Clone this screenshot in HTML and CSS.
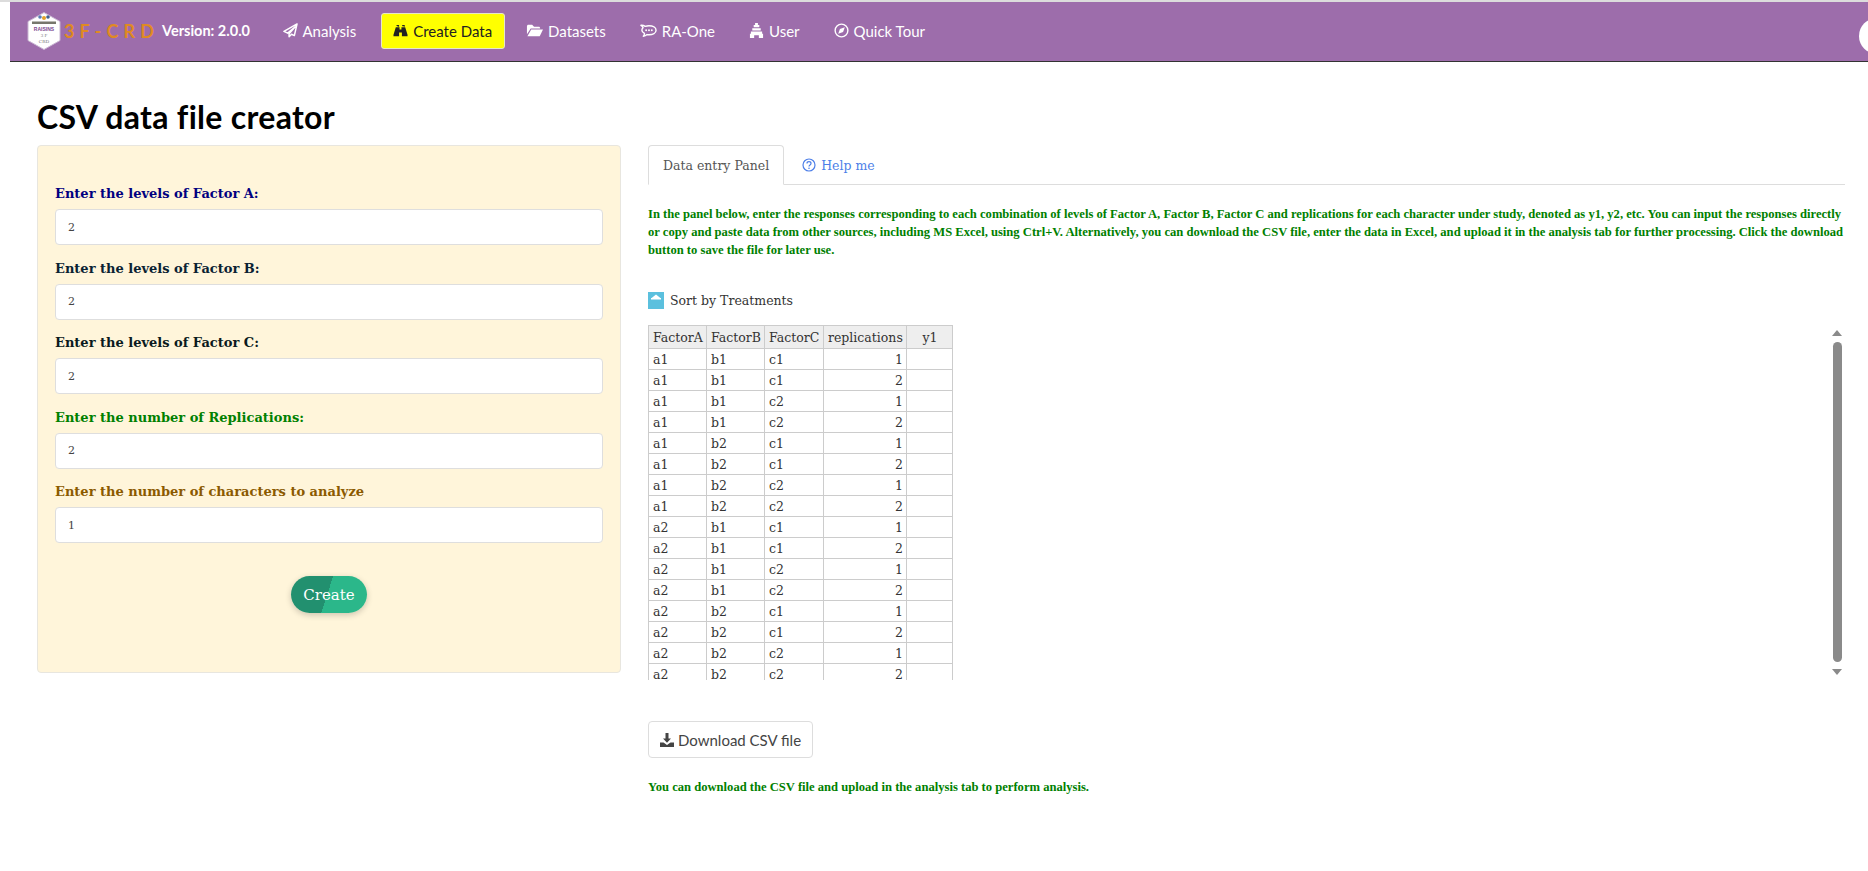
FILE: index.html
```html
<!DOCTYPE html>
<html lang="en">
<head>
  <meta charset="UTF-8" />
  <title>3F-CRD - CSV data file creator</title>
  <link rel="stylesheet" href="styles.css">
</head>
<body>
  <div class="page">
    <nav class="navbar">
      <div class="brand">
        <svg class="logo" width="34" height="38" viewBox="0 0 34 38">
          <polygon points="17,0.5 33,9.5 33,28.5 17,37.5 1,28.5 1,9.5" fill="#fff" stroke="#c9b6d2"/>
          <circle cx="13" cy="5" r="1.800" fill="#5a7fb5"/>
          <circle cx="17" cy="6" r="2" fill="#e3a028"/>
          <circle cx="21" cy="5" r="1.800" fill="#3f5f8f"/>
          <rect x="5" y="9.500" width="24" height="2.500" fill="#77776c"/>
          <text class="logo-band" x="17" y="18.500">RAISINS</text>
          <text class="logo-small" x="17" y="25">3 F</text>
          <text class="logo-small" x="17" y="30.500">CRD</text>
        </svg>
        <span class="brand-name">3 F - C R D</span>
        <span class="brand-version">Version: 2.0.0</span>
      </div>
      <ul class="nav-links">
        <li class="nav-item">
          <svg class="nav-icon" viewBox="0 0 16 16"><path d="M15 1 1 9l4 1.800L13 4 6.500 11.600v3l2.600-2.600 3 1.400z" fill="none" stroke="currentColor" stroke-width="1.600" stroke-linejoin="round"/></svg>
          Analysis
        </li>
        <li class="nav-item active">
          <svg class="nav-icon" viewBox="0 0 16 16"><path d="M3.500 2h3v2h-1v-.500h-1V4zM9.500 2h3v2h-1v-.500h-1V4zM3 4.500h4V7h2V4.500h4l2.500 8V14H9.500v-4h-3v4H.5v-1.500z" fill="currentColor"/></svg>
          Create Data
        </li>
        <li class="nav-item">
          <svg class="nav-icon wide" viewBox="0 0 18 14"><path d="M1 2.500C1 1.700 1.700 1 2.500 1h4l2 2h5c.8 0 1.500.7 1.500 1.500V5H5L1 11z" fill="currentColor"/><path d="M5.500 6H18l-3.500 7H1.500z" fill="currentColor"/></svg>
          Datasets
        </li>
        <li class="nav-item">
          <svg class="nav-icon wide" viewBox="0 0 18 15"><path d="M9.500 2.500c4 0 7.500 1.700 7.500 4.700s-3.500 4.800-7.500 4.800c-.8 0-1.400 0-2-.2-1 1-2.500 1.700-4 1.700 1-.9 1.300-1.900 1.200-2.900C3 9.700 2 8.500 2 7.200c0-1 .5-2 1.300-2.600C2.800 3.500 2 2.500 1 2c1.700-.2 3.300.3 4.600 1.100 1.200-.4 2.500-.6 3.900-.6z" fill="none" stroke="currentColor" stroke-width="1.500" stroke-linejoin="round"/><circle cx="6.500" cy="7.300" r="1" fill="currentColor"/><circle cx="9.500" cy="7.300" r="1" fill="currentColor"/><circle cx="12.500" cy="7.300" r="1" fill="currentColor"/></svg>
          RA-One
        </li>
        <li class="nav-item">
          <svg class="nav-icon" viewBox="0 0 16 16"><path d="M6.500 0h3v2h1.500v2.500H5V2h1.500zM3.500 5.500h9V8h-9zM2 9h12v2.500h1V16h-4.500v-3h-5v3H1v-4.500h1z" fill="currentColor"/></svg>
          User
        </li>
        <li class="nav-item">
          <svg class="nav-icon" viewBox="0 0 16 16"><circle cx="8" cy="8" r="6.800" fill="none" stroke="currentColor" stroke-width="1.500"/><path d="M11.500 4.500 9.700 9.700 4.500 11.500 6.300 6.300z" fill="currentColor"/></svg>
          Quick Tour
        </li>
      </ul>
      <span class="nav-circle"></span>
    </nav>

    <main class="content">
      <h1>CSV data file creator</h1>
      <div class="columns">
        <section class="well">
          <div class="form-group">
            <label class="label-a" for="levelsA">Enter the levels of Factor A:</label>
            <input id="levelsA" type="text" value="2">
          </div>
          <div class="form-group">
            <label class="label-b" for="levelsB">Enter the levels of Factor B:</label>
            <input id="levelsB" type="text" value="2">
          </div>
          <div class="form-group">
            <label class="label-c" for="levelsC">Enter the levels of Factor C:</label>
            <input id="levelsC" type="text" value="2">
          </div>
          <div class="form-group">
            <label class="label-r" for="reps">Enter the number of Replications:</label>
            <input id="reps" type="text" value="2">
          </div>
          <div class="form-group">
            <label class="label-n" for="chars">Enter the number of characters to analyze</label>
            <input id="chars" type="text" value="1">
          </div>
          <div class="create-row">
            <button class="create-btn" type="button">Create</button>
          </div>
        </section>

        <section class="panel">
          <ul class="tabs">
            <li class="tab active">Data entry Panel</li>
            <li class="tab help">
              <svg class="help-icon" viewBox="0 0 14 14"><circle cx="7" cy="7" r="6" fill="none" stroke="currentColor" stroke-width="1.200"/><path d="M5 5.500C5 4.300 6 3.700 7 3.700s2 .6 2 1.700c0 1.500-2 1.500-2 3" fill="none" stroke="currentColor" stroke-width="1.200"/><circle cx="7" cy="10.200" r=".8" fill="currentColor"/></svg>
              Help me
            </li>
          </ul>

          <p class="note intro">In the panel below, enter the responses corresponding to each combination of levels of Factor A, Factor B, Factor C and replications for each character under study, denoted as y1, y2, etc. You can input the responses directly or copy and paste data from other sources, including MS Excel, using Ctrl+V. Alternatively, you can download the CSV file, enter the data in Excel, and upload it in the analysis tab for further processing. Click the download button to save the file for later use.</p>

          <div class="sort-row">
            <svg class="sort-icon" width="16" height="17" viewBox="0 0 16 17"><rect width="16" height="17" fill="#5bc0de"/><path d="M3 6.500 8 2.500l5 4z" fill="#fff"/><rect x="3" y="6" width="10" height="1.500" fill="#fff"/></svg>
            <span>Sort by Treatments</span>
          </div>

          <div class="sheet">
            <div class="sheet-clip">
              <table>
                <thead>
                  <tr><th>FactorA</th><th>FactorB</th><th>FactorC</th><th>replications</th><th class="col-y">y1</th></tr>
                </thead>
                <tbody>
                  <tr><td>a1</td><td>b1</td><td>c1</td><td class="num">1</td><td></td></tr>
                  <tr><td>a1</td><td>b1</td><td>c1</td><td class="num">2</td><td></td></tr>
                  <tr><td>a1</td><td>b1</td><td>c2</td><td class="num">1</td><td></td></tr>
                  <tr><td>a1</td><td>b1</td><td>c2</td><td class="num">2</td><td></td></tr>
                  <tr><td>a1</td><td>b2</td><td>c1</td><td class="num">1</td><td></td></tr>
                  <tr><td>a1</td><td>b2</td><td>c1</td><td class="num">2</td><td></td></tr>
                  <tr><td>a1</td><td>b2</td><td>c2</td><td class="num">1</td><td></td></tr>
                  <tr><td>a1</td><td>b2</td><td>c2</td><td class="num">2</td><td></td></tr>
                  <tr><td>a2</td><td>b1</td><td>c1</td><td class="num">1</td><td></td></tr>
                  <tr><td>a2</td><td>b1</td><td>c1</td><td class="num">2</td><td></td></tr>
                  <tr><td>a2</td><td>b1</td><td>c2</td><td class="num">1</td><td></td></tr>
                  <tr><td>a2</td><td>b1</td><td>c2</td><td class="num">2</td><td></td></tr>
                  <tr><td>a2</td><td>b2</td><td>c1</td><td class="num">1</td><td></td></tr>
                  <tr><td>a2</td><td>b2</td><td>c1</td><td class="num">2</td><td></td></tr>
                  <tr><td>a2</td><td>b2</td><td>c2</td><td class="num">1</td><td></td></tr>
                  <tr><td>a2</td><td>b2</td><td>c2</td><td class="num">2</td><td></td></tr>
                </tbody>
              </table>
            </div>
            <div class="scrollbar">
              <span class="arrow-up"></span>
              <span class="thumb"></span>
              <span class="arrow-down"></span>
            </div>
          </div>

          <button class="download-btn" type="button">
            <svg class="download-icon" viewBox="0 0 14 14"><path d="M5.500 0h3v5.500H11L7 9.700 3 5.500h2.500z" fill="currentColor"/><path d="M0 9.500h3.500L7 12l3.500-2.500H14V14H0z" fill="currentColor"/></svg>
            Download CSV file
          </button>

          <p class="note outro">You can download the CSV file and upload in the analysis tab to perform analysis.</p>
        </section>
      </div>
    </main>
  </div>
</body>
</html>
```

FILE: styles.css
```css
* {
  margin: 0;
  padding: 0;
  box-sizing: border-box;
}

html, body {
  height: 100%;
  overflow: hidden;
}

body {
  background: #fff;
  color: #222;
  font-family: "DejaVu Serif", Georgia, serif;
  font-size: 12px;
  border-top: 2px solid #dcdcdc;
}

.page {
  padding-left: 10px;
}

/* navbar */
.navbar {
  display: flex;
  align-items: center;
  position: relative;
  height: 60px;
  padding: 0 0 2px 17px;
  background: #9d6dab;
  border-bottom: 1px solid #333;
  overflow: hidden;
  font-family: Lato, sans-serif;
}

.brand {
  display: flex;
  align-items: center;
}

.logo-band {
  font-family: "Liberation Sans", sans-serif;
  font-size: 5px;
  font-weight: 700;
  fill: #7d4a90;
  text-anchor: middle;
}

.logo-small {
  font-family: "Liberation Serif", serif;
  font-size: 5px;
  fill: #777;
  text-anchor: middle;
}

.brand-name {
  width: 98px;
  margin-left: 3px;
  color: #e08a22;
  font-size: 18px;
  font-weight: 700;
  letter-spacing: 0.4px;
}

.brand-version {
  color: #fff;
  font-size: 14.5px;
  font-weight: 700;
}

.nav-links {
  display: flex;
  align-items: center;
  list-style: none;
  margin-left: 20px;
}

.nav-item {
  display: flex;
  align-items: center;
  gap: 5px;
  height: 36px;
  padding: 0 11.5px;
  margin-right: 9px;
  color: #fff;
  font-size: 15px;
  border-radius: 3px;
  border: 1px solid transparent;
}

.nav-item:first-child {
  margin-right: 12px;
}

.nav-item.active {
  background: #ff0;
  color: #222;
  border-color: #e6e6c8;
}

.nav-icon {
  width: 15px;
  height: 15px;
}

.nav-icon.wide {
  width: 17px;
}

.nav-circle {
  position: absolute;
  right: -27px;
  top: 16px;
  width: 36px;
  height: 36px;
  background: #fff;
  border-radius: 50%;
}

/* page body */
.content {
  padding: 0 23px 0 27px;
}

h1 {
  margin: 37px 0 10px;
  font-family: Lato, sans-serif;
  font-size: 32px;
  font-weight: 700;
  line-height: 36px;
  letter-spacing: 0.3px;
  color: #000;
}

.columns {
  display: flex;
  gap: 27px;
}

.well {
  width: 584px;
  height: 528px;
  flex-shrink: 0;
  padding: 39px 17px 0;
  background: #fff5da;
  border: 1px solid #e8e6df;
  border-radius: 4px;
}

.form-group {
  margin-bottom: 14.5px;
}

.form-group label {
  display: block;
  margin-bottom: 7px;
  font-size: 13px;
  font-weight: 700;
  line-height: 17px;
}

.label-a { color: #000080; }
.label-b { color: #0a2233; }
.label-c { color: #0a1a20; }
.label-r { color: #008000; }
.label-n { color: #8b5a00; }

.form-group input {
  display: block;
  width: 100%;
  height: 36px;
  padding: 0 12px;
  font-family: inherit;
  font-size: 11px;
  color: #444;
  background: #fff;
  border: 1px solid #dedede;
  border-radius: 4px;
}

.create-row {
  display: flex;
  justify-content: center;
  margin-top: 33px;
}

.create-btn {
  width: 76px;
  height: 37px;
  font-family: inherit;
  font-size: 15px;
  color: #fff;
  background: linear-gradient(108deg, #22906f 48%, #2bb78a 48%);
  border: none;
  border-radius: 19px;
  box-shadow: 0 2px 6px rgba(0,0,0,0.2);
}

/* right panel */
.panel {
  flex: 1;
  min-width: 0;
}

.tabs {
  display: flex;
  list-style: none;
  height: 40px;
  border-bottom: 1px solid #ddd;
}

.tab {
  display: flex;
  align-items: center;
  height: 40px;
  padding: 0 14px;
  font-size: 12.5px;
}

.tab.active {
  color: #555;
  background: #fff;
  border: 1px solid #ddd;
  border-bottom-color: #fff;
  border-radius: 4px 4px 0 0;
}

.tab.help {
  gap: 5px;
  margin-left: 4px;
  color: #4d7fe8;
}

.help-icon {
  width: 14px;
  height: 14px;
}

.note {
  font-family: "Liberation Serif", serif;
  font-size: 12.6px;
  font-weight: 700;
  line-height: 18px;
  color: #008000;
}

.intro {
  margin-top: 20px;
}

.sort-row {
  display: flex;
  align-items: center;
  gap: 6px;
  margin-top: 33px;
  font-size: 12.5px;
  color: #333;
}

.sort-icon {
  flex-shrink: 0;
}

.sheet {
  display: flex;
  justify-content: space-between;
  height: 355px;
  margin-top: 16px;
  padding-right: 3px;
}

.sheet-clip {
  height: 355px;
  overflow: hidden;
}

table {
  border-collapse: collapse;
  table-layout: fixed;
  width: 304px;
  font-size: 12.5px;
}

th, td {
  height: 21px;
  padding: 0 3px 0 4px;
  border: 1px solid #ccc;
  font-weight: 400;
  color: #333;
  text-align: left;
  white-space: nowrap;
  overflow: hidden;
}

th {
  height: 23px;
  background: #eee;
}

th:nth-child(1), th:nth-child(2) { width: 58px; }
th:nth-child(3) { width: 59px; }
th:nth-child(4) { width: 83px; }
th.col-y { width: 46px; text-align: center; }
td.num { text-align: right; }

.scrollbar {
  display: flex;
  flex-direction: column;
  align-items: center;
  flex-shrink: 0;
  width: 10px;
  height: 355px;
  padding: 5px 0;
}

.arrow-up, .arrow-down {
  width: 0;
  height: 0;
  border-left: 5px solid transparent;
  border-right: 5px solid transparent;
}

.arrow-up { border-bottom: 6px solid #8a8a8a; }
.arrow-down { border-top: 6px solid #8a8a8a; }

.thumb {
  flex: 1;
  width: 9px;
  margin: 6px 0 7px;
  background: #8a8a8a;
  border-radius: 5px;
}

.download-btn {
  display: flex;
  align-items: center;
  gap: 4px;
  width: 165px;
  height: 37px;
  margin-top: 41px;
  padding: 0 11px;
  font-family: Lato, sans-serif;
  font-size: 15px;
  color: #444;
  white-space: nowrap;
  background: #fff;
  border: 1px solid #ddd;
  border-radius: 4px;
}

.download-icon {
  width: 14px;
  height: 14px;
  flex-shrink: 0;
}

.outro {
  margin-top: 20px;
}
```
